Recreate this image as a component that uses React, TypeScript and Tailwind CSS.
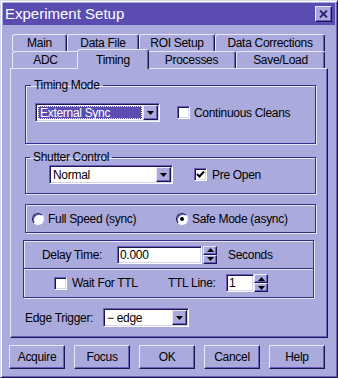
const raised =
  "border border-t-[#e8e8f8] border-l-[#e8e8f8] border-r-[#1c1650] border-b-[#1c1650] shadow-[inset_-1px_-1px_0_#6a5eb8]";
const sunken =
  "border border-t-[#6a5eb8] border-l-[#6a5eb8] border-r-[#ffffff] border-b-[#ffffff] shadow-[inset_1px_1px_0_#1c1650,inset_-1px_-1px_0_#d4d4f0]";
const etched =
  "border border-[#3a2e8c] shadow-[inset_1px_1px_0_#e8e8f8,1px_1px_0_#e8e8f8]";

function Arrow({ up = false }: { up?: boolean }) {
  return (
    <svg width="7" height="4" viewBox="0 0 7 4">
      <polygon points={up ? "0,4 7,4 3.5,0" : "0,0 7,0 3.5,4"} fill="#000" />
    </svg>
  );
}

function Combo({ w, value, selected = false }: { w: string; value: string; selected?: boolean }) {
  return (
    <div className={`${w} h-[19px] bg-white ${sunken} flex p-[1px]`}>
      <div className="flex-1 p-[1px] flex">
        <div
          className={`flex-1 flex items-center pl-[1px] ${
            selected ? "bg-[#5a4cb0] text-white border border-dotted border-[#ffff90]" : ""
          }`}
        >
          {value}
        </div>
      </div>
      <div className={`w-[15px] bg-[#aaaadc] ${raised} flex items-center justify-center`}>
        <Arrow />
      </div>
    </div>
  );
}

function Spinner() {
  return (
    <div className="w-[14px] h-[18px] flex flex-col">
      <div className={`flex-1 bg-[#aaaadc] ${raised} flex items-center justify-center`}>
        <Arrow up />
      </div>
      <div className={`flex-1 bg-[#aaaadc] ${raised} flex items-center justify-center`}>
        <Arrow />
      </div>
    </div>
  );
}

function Check({ on = false }: { on?: boolean }) {
  return (
    <div className={`w-[13px] h-[13px] bg-white ${sunken} flex items-center justify-center`}>
      {on && (
        <svg width="9" height="9" viewBox="0 0 9 9">
          <polyline points="1,4 3.5,6.5 8,1.5" fill="none" stroke="#000" strokeWidth="2" />
        </svg>
      )}
    </div>
  );
}

function Radio({ on = false }: { on?: boolean }) {
  return (
    <div className="w-[12px] h-[12px] rounded-full bg-white border border-t-[#1c1650] border-l-[#1c1650] border-r-[#ffffff] border-b-[#ffffff] shadow-[inset_1px_1px_0_#6a5eb8] flex items-center justify-center">
      {on && <div className="w-[4px] h-[4px] rounded-full bg-black" />}
    </div>
  );
}

function Tab({ w, label, active = false }: { w: string; label: string; active?: boolean }) {
  return (
    <div
      className={`${w} ${
        active ? "h-[20px] -mx-[2px] -mb-[1px] relative z-10" : "h-full"
      } bg-[#aaaadc] border-t border-l border-r border-t-[#e8e8f8] border-l-[#e8e8f8] border-r-[#1c1650] rounded-t-[3px] shadow-[inset_-1px_0_0_#6a5eb8] flex items-center justify-center`}
    >
      {label}
    </div>
  );
}

function Button({ label }: { label: string }) {
  return (
    <div className={`w-[56px] h-[24px] ${raised} flex items-center justify-center`}>{label}</div>
  );
}

export default function App() {
  return (
    <div className="w-[338px] h-[378px] bg-[#aaaadc] border border-t-[#d8d8f0] border-l-[#d8d8f0] border-r-[#1c1650] border-b-[#1c1650] shadow-[inset_1px_1px_0_#ffffff,inset_-1px_-1px_0_#6a5eb8] p-[2px] flex flex-col font-['Liberation_Sans',Arial,sans-serif] text-[12px] tracking-[-0.3px] text-black">
      <div className="h-[22px] bg-[#5a4cb0] flex items-center justify-between pl-[2px] pr-[3px]">
        <span className="text-white text-[15px] tracking-normal">Experiment Setup</span>
        <div className={`w-[17px] h-[16px] bg-[#aaaadc] ${raised} flex items-center justify-center`}>
          <svg width="9" height="8" viewBox="0 0 9 8">
            <path d="M1 0.5 L8 7.5 M8 0.5 L1 7.5" stroke="#2a2070" strokeWidth="1.8" />
          </svg>
        </div>
      </div>

      <div className="mt-[9px] ml-[7px] w-[318px] flex flex-col">
        <div className="pl-[2px] flex flex-col">
          <div className="h-[17px] flex">
            <Tab w="w-[55px]" label="Main" />
            <Tab w="w-[72px]" label="Data File" />
            <Tab w="w-[76px]" label="ROI Setup" />
            <Tab w="w-[110px]" label="Data Corrections" />
          </div>
          <div className="h-[17px] flex items-end">
            <Tab w="w-[67px]" label="ADC" />
            <Tab w="w-[72px]" label="Timing" active />
            <Tab w="w-[89px]" label="Processes" />
            <Tab w="w-[89px]" label="Save/Load" />
          </div>
        </div>

        <div className="h-[270px] border border-t-[#e8e8f8] border-l-[#e8e8f8] border-r-[#1c1650] border-b-[#1c1650] shadow-[inset_-1px_-1px_0_#6a5eb8] flex flex-col">
          <fieldset className={`ml-[14px] mt-[9px] w-[291px] ${etched} px-[5px] pt-[11px] pb-[21px]`}>
            <legend className="px-[3px] leading-[14px]">Timing Mode</legend>
            <div className="flex items-center pl-[4px]">
              <Combo w="w-[125px]" value="External Sync" selected />
              <div className="ml-[17px]">
                <Check />
              </div>
              <span className="ml-[4px]">Continuous Cleans</span>
            </div>
          </fieldset>

          <fieldset className={`ml-[14px] mt-[6px] w-[291px] ${etched} px-[4px] pt-[1px] pb-[9px]`}>
            <legend className="px-[3px] leading-[14px]">Shutter Control</legend>
            <div className="flex items-center pl-[19px]">
              <Combo w="w-[124px]" value="Normal" />
              <div className="ml-[21px]">
                <Check on />
              </div>
              <span className="ml-[5px]">Pre Open</span>
            </div>
          </fieldset>

          <div className={`ml-[14px] mt-[10px] w-[291px] h-[29px] ${etched} flex items-center pl-[6px]`}>
            <div className="w-[144px] flex items-center">
              <Radio />
              <span className="ml-[4px]">Full Speed (sync)</span>
            </div>
            <Radio on />
            <span className="ml-[4px]">Safe Mode (async)</span>
          </div>

          <div className={`ml-[12px] mt-[7px] w-[291px] ${etched} flex flex-col`}>
            <div className="h-[28px] flex items-center pl-[18px] border-b border-[#3a2e8c]">
              <span className="w-[75px]">Delay Time:</span>
              <div className={`w-[85px] h-[18px] bg-white ${sunken} flex items-center pl-[2px]`}>0.000</div>
              <div className="ml-[1px]">
                <Spinner />
              </div>
              <span className="ml-[11px]">Seconds</span>
            </div>
            <div className="h-[28px] flex items-center pl-[30px] shadow-[inset_0_1px_0_#e8e8f8]">
              <div className="w-[114px] flex items-center">
                <Check />
                <span className="ml-[5px]">Wait For TTL</span>
              </div>
              <span className="w-[58px]">TTL Line:</span>
              <div className={`w-[28px] h-[18px] bg-white ${sunken} flex items-center pl-[2px]`}>1</div>
              <Spinner />
            </div>
          </div>

          <div className="mt-[10px] pl-[14px] flex items-center">
            <span className="w-[78px]">Edge Trigger:</span>
            <Combo w="w-[86px]" value="− edge" />
          </div>
        </div>
      </div>

      <div className="mt-[7px] pl-[6px] flex gap-[9px]">
        <Button label="Acquire" />
        <Button label="Focus" />
        <Button label="OK" />
        <Button label="Cancel" />
        <Button label="Help" />
      </div>
    </div>
  );
}
